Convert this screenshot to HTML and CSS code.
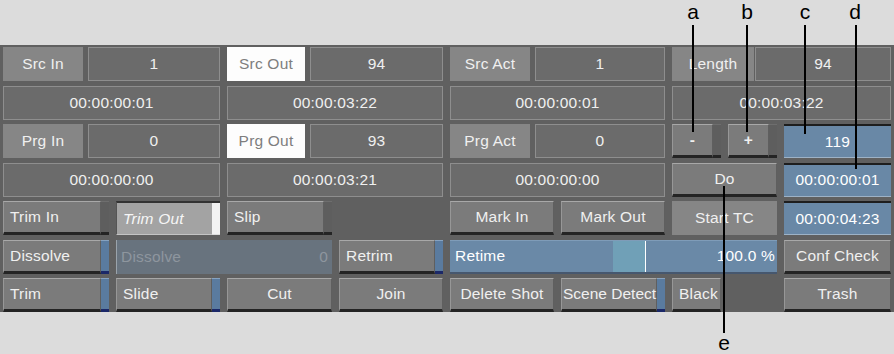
FILE: index.html
```html
<!DOCTYPE html>
<html>
	<head>
		<meta charset="UTF-8">
		<title>Trim</title>
		<link rel="stylesheet" href="styles.css">
	</head>
	<body>
		<div class="page">
			<div class="panel">
				<!-- source row -->
				<div class="pair"><span class="lbl">Src In</span><span class="val">1</span></div>
				<div class="pair"><span class="lbl lit">Src Out</span><span class="val">94</span></div>
				<div class="pair"><span class="lbl">Src Act</span><span class="val">1</span></div>
				<div class="pair wide"><span class="lbl">Length</span><span class="val">94</span></div>

				<div class="tc">00:00:00:01</div>
				<div class="tc">00:00:03:22</div>
				<div class="tc">00:00:00:01</div>
				<div class="tc">00:00:03:22</div>

				<!-- program row -->
				<div class="pair"><span class="lbl">Prg In</span><span class="val">0</span></div>
				<div class="pair"><span class="lbl lit">Prg Out</span><span class="val">93</span></div>
				<div class="pair"><span class="lbl">Prg Act</span><span class="val">0</span></div>
				<div class="duo">
					<div class="split"><span class="face mid">-</span><span class="tab"></span></div>
					<div class="split"><span class="face mid">+</span><span class="tab"></span></div>
				</div>
				<div class="blue">119</div>

				<div class="tc">00:00:00:00</div>
				<div class="tc">00:00:03:21</div>
				<div class="tc">00:00:00:00</div>
				<div class="btn">Do</div>
				<div class="blue">00:00:00:01</div>

				<!-- tools -->
				<div class="split"><span class="face">Trim In</span><span class="tab"></span></div>
				<div class="split on"><span class="face">Trim Out</span><span class="tab"></span></div>
				<div class="split"><span class="face">Slip</span><span class="tab"></span></div>
				<div></div>
				<div class="btn">Mark In</div>
				<div class="btn">Mark Out</div>
				<div class="flat">Start TC</div>
				<div class="blue">00:00:04:23</div>

				<div class="split"><span class="face">Dissolve</span><span class="tab bl"></span></div>
				<div class="off"><span>Dissolve</span><span>0</span></div>
				<div class="split"><span class="face">Retrim</span><span class="tab bl"></span></div>
				<div class="slider"><span>Retime</span><span>100.0 %</span></div>
				<div class="btn">Conf Check</div>

				<div class="split"><span class="face">Trim</span><span class="tab bl"></span></div>
				<div class="split"><span class="face">Slide</span><span class="tab bl"></span></div>
				<div class="btn">Cut</div>
				<div class="btn">Join</div>
				<div class="btn">Delete Shot</div>
				<div class="split"><span class="face tight">Scene Detect</span><span class="tab bl"></span></div>
				<div class="duo"><div class="btn left">Black</div></div>
				<div class="btn">Trash</div>
			</div>

			<!-- callouts -->
			<span class="letter la">a</span><span class="stem sa"></span>
			<span class="letter lb">b</span><span class="stem sb"></span>
			<span class="letter lc">c</span><span class="stem sc"></span>
			<span class="letter ld">d</span><span class="stem sd"></span>
			<span class="letter le">e</span><span class="stem se"></span>
		</div>
	</body>
</html>
```

FILE: styles.css
```css
* {
	margin: 0;
	padding: 0;
	box-sizing: border-box;
}

body {
	background: #dcdcdc;
	font-family: "Liberation Sans", Arial, sans-serif;
}

.page {
	position: relative;
	width: 894px;
	height: 354px;
	padding-top: 45px;
}

.panel {
	display: grid;
	grid-template-columns: 106px 104px 105px 104px 104px 104px 105px 107px;
	grid-template-rows: repeat(7, 34px);
	column-gap: 7px;
	row-gap: 4.5px;
	padding: 2px 0 0 3px;
	height: 267px;
	background: #606060;
	font-size: 15.5px;
	letter-spacing: 0.2px;
	color: #f0f0f0;
}

/* label + value pairs */
.pair {
	grid-column: span 2;
	display: flex;
	gap: 5px;
}
.lbl {
	width: 80px;
	display: flex;
	align-items: center;
	justify-content: center;
	background: #868686;
}
.lbl.lit {
	width: 78px;
	background: #fdfdfd;
	color: #7e7e7e;
}
.pair.wide {
	gap: 1px;
}
.pair.wide .lbl {
	width: 82px;
}
.val {
	flex: 1;
	display: flex;
	align-items: center;
	justify-content: center;
	background: #6b6b6b;
	border: 1px solid #8e8e8e;
}

.tc {
	grid-column: span 2;
	display: flex;
	align-items: center;
	justify-content: center;
	background: #6b6b6b;
	border: 1px solid #8e8e8e;
}

/* buttons */
.btn, .face {
	display: flex;
	align-items: center;
	justify-content: center;
	background: #7b7b7b;
	border-top: 1px solid #a8a8a8;
	border-left: 1px solid #979797;
	border-right: 1px solid #5f5f5f;
	border-bottom: 3px solid #242424;
	white-space: nowrap;
}
.btn.left {
	justify-content: flex-start;
	padding-left: 6px;
}

.duo {
	display: flex;
	gap: 7px;
}
.duo > * {
	width: 49px;
}

.split {
	display: flex;
}
.split .face {
	flex: 1;
	justify-content: flex-start;
	padding-left: 6px;
}
.split .face.mid {
	justify-content: center;
	padding-left: 0;
	font-weight: bold;
}
.split .face.tight {
	padding-left: 1px;
	letter-spacing: 0;
}
.tab {
	width: 8px;
	background: #5e5e5e;
	border-top: 1px solid #6e6e6e;
	border-bottom: 3px solid #242424;
}
.tab.bl {
	background: #5a7b9f;
	border-top-color: #86a2c0;
	border-bottom-color: #1b2868;
}

.split.on .face {
	background: #a3a3a3;
	border-top: 2px solid #333;
	border-left: 1px solid #555;
	border-right: none;
	border-bottom: 1px solid #c4c4c4;
	font-style: italic;
	color: #f6f6f6;
}
.split.on .tab {
	background: #f2f2f2;
	border-top: 2px solid #333;
	border-bottom: 1px solid #ddd;
}

.flat {
	display: flex;
	align-items: center;
	justify-content: center;
	background: #868686;
}

.blue {
	display: flex;
	align-items: center;
	justify-content: center;
	background: #6988a6;
	border-top: 2px solid #1e1e1e;
	border-bottom: 1px solid #9db2c6;
	color: #fff;
}

.off {
	grid-column: span 2;
	display: flex;
	align-items: center;
	justify-content: space-between;
	padding: 0 4px 0 4px;
	background: #68737e;
	border-left: 1px solid #9aa3ab;
	color: #8e969e;
}

.slider {
	grid-column: span 3;
	display: flex;
	align-items: center;
	justify-content: space-between;
	padding: 0 2px 0 5px;
	background: linear-gradient(to right, #6a89a7 0 163px, #70a0b7 163px 195px, #fff 195px 196px, #6a89a7 196px);
	border-top: 1px solid #7f9cb8;
	border-bottom: 2px solid #46576e;
	color: #fff;
}

/* callout letters and lines */
.letter {
	position: absolute;
	width: 24px;
	margin-left: -12px;
	text-align: center;
	font: 21px/24px "Liberation Sans", Arial, sans-serif;
	color: #000;
}
.stem {
	position: absolute;
	width: 2px;
	background: #000;
}
.la { left: 693px; top: 0; }
.lb { left: 747px; top: 0; }
.lc { left: 805px; top: 0; }
.ld { left: 855px; top: 0; }
.le { left: 724px; top: 331px; }

.sa { left: 692px; top: 25px; height: 107px; }
.sb { left: 746px; top: 25px; height: 107px; }
.sc { left: 804px; top: 25px; height: 109px; }
.sd { left: 855px; top: 25px; height: 144px; }
.se { left: 723px; top: 186px; height: 147px; }
```
